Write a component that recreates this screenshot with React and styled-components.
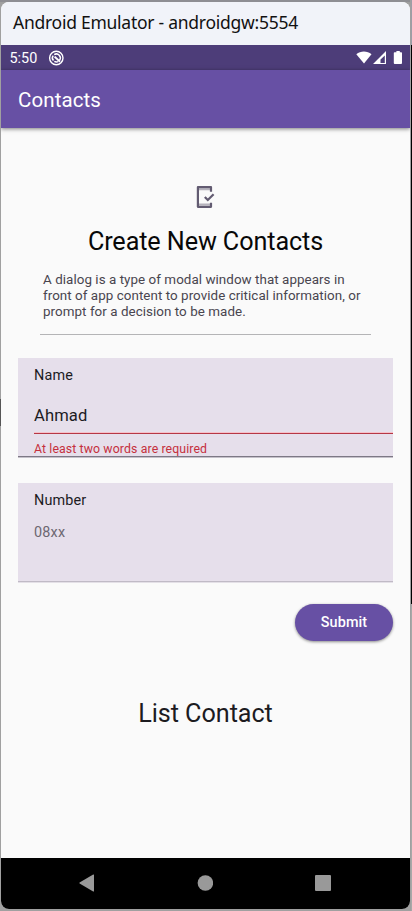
import React from 'react';
import styled, { createGlobalStyle } from 'styled-components';

const Global = createGlobalStyle`
  *, *::before, *::after { box-sizing: border-box; }
  body { margin: 0; overflow: hidden; font-family: Roboto, sans-serif; }
  h1, h2, p { margin: 0; font-weight: 400; }
`;

const Desktop = styled.div`
  width: 412px;
  height: 911px;
  padding: 2px 1px 2px;
  background:
    linear-gradient(#8e8e93, #8e8e93) 0 0 / 410px 2px no-repeat,
    linear-gradient(#555, #555) 0 399px / 1px 27px no-repeat,
    linear-gradient(#9c9da6 0 45px, #000 45px 604px, #a8a8a8 604px) 411px 0 / 1px 911px no-repeat,
    #a0a0a0;
`;

const EmulatorWindow = styled.div`
  width: 409px;
  height: 907px;
  display: flex;
  flex-direction: column;
  border-radius: 8px;
  overflow: hidden;
  background: #fafafa;
`;

const TitleBar = styled.header`
  height: 43px;
  padding-left: 12px;
  background: #f1f3f9;
  color: #111;
  font: 17.5px/41px "Noto Sans", sans-serif;
  letter-spacing: -0.26px;
  white-space: nowrap;
`;

const StatusBar = styled.div`
  height: 25px;
  padding: 0 7px 0 8.5px;
  display: flex;
  align-items: center;
  background: #4d3d79;
  color: #fff;
  svg { display: block; }
`;

const Clock = styled.span`
  width: 38.5px;
  font-size: 14.4px;
  line-height: 25px;
  padding-top: 1px;
`;

const SystemIcons = styled.div`
  margin-left: auto;
  display: flex;
  align-items: center;
`;

const AppBar = styled.div`
  position: relative;
  flex: none;
  height: 58px;
  padding-left: 17px;
  background: #6750a4;
  box-shadow: 0 1px 4px rgba(0, 0, 0, 0.5);
  color: #fff;
  font-size: 20.5px;
  line-height: 60px;
  letter-spacing: 0.1px;
`;

const Content = styled.main`
  flex: 1;
  display: flex;
  flex-direction: column;
  padding: 57px 17px 0;
`;

const DialogIcon = styled.svg`
  display: block;
  flex: none;
  margin: 0 0 0 174px;
`;

const Heading = styled.h1`
  margin-top: 17px;
  font-size: 25.2px;
  line-height: 32px;
  letter-spacing: -0.1px;
  text-align: center;
  color: #080808;
  white-space: nowrap;
`;

const Description = styled.p`
  margin: 14.3px 0 0 25px;
  color: #49454f;
  font-size: 13.4px;
  line-height: 15.8px;
  letter-spacing: 0.05px;
  white-space: nowrap;
`;

const Divider = styled.hr`
  width: 331px;
  height: 1px;
  flex: none;
  margin: 14.3px 0 23.5px 22px;
  border: 0;
  background: #b4b4b6;
`;

const Field = styled.div`
  display: flex;
  flex-direction: column;
  height: 99px;
  margin-bottom: 26px;
  padding: 9px 0 0 16px;
  background: #e6dfeb;
  border-bottom: 1px solid ${(p) => (p.$strong ? '#7d7885' : '#c0bac6')};
  box-shadow: 0 1px 0 ${(p) => (p.$strong ? '#c5c1ca' : '#e4e0e7')};
  white-space: nowrap;
`;

const FieldLabel = styled.span`
  color: #1c1b1f;
  font-size: 14.4px;
  line-height: 18px;
  letter-spacing: 0.15px;
`;

const FieldValue = styled.span`
  height: 42px;
  margin-top: 7px;
  border-bottom: 1px solid #b63745;
  box-shadow: inset 0 -1px 0 #f5c2cb;
  color: #1c1b1f;
  font-size: 16.6px;
  line-height: 48px;
  letter-spacing: 0.1px;
`;

const FieldError = styled.span`
  margin-top: 8px;
  color: #c5303d;
  font-size: 12.3px;
  line-height: 15px;
  letter-spacing: 0.11px;
`;

const Placeholder = styled.span`
  margin-top: 14px;
  color: #6c6771;
  font-size: 14.4px;
  line-height: 18px;
  letter-spacing: 0.2px;
`;

const SubmitButton = styled.button`
  align-self: flex-end;
  width: 98px;
  height: 37px;
  margin-top: -4px;
  padding: 0;
  border: 0;
  border-radius: 19px;
  background: #6750a4;
  box-shadow: 0 1px 3px rgba(0, 0, 0, 0.45);
  color: #fff;
  font: 500 14.4px/38px Roboto, sans-serif;
  letter-spacing: 0.1px;
`;

const ListTitle = styled.h2`
  margin-top: 57px;
  font-size: 25.2px;
  line-height: 32px;
  letter-spacing: -0.05px;
  text-align: center;
  color: #1c1b1f;
`;

const NavBar = styled.nav`
  height: 51px;
  display: flex;
  align-items: center;
  justify-content: space-between;
  padding: 0 79px 2px 78px;
  background: #000;
  svg { display: block; }
`;

export default function App() {
  return (
    <>
      <Global />
      <Desktop>
        <EmulatorWindow>
          <TitleBar>Android Emulator - androidgw:5554</TitleBar>
          <StatusBar>
            <Clock>5:50</Clock>
            <svg width="16" height="16" viewBox="0 0 16 16" fill="none" stroke="#fff">
              <circle cx="8.3" cy="8" r="6.7" strokeWidth="1.4" />
              <path d="M5.5 10.6A3.9 3.9 0 0 1 5.2 5.6M11.4 10.4A3.9 3.9 0 0 0 6.2 4.7M6.3 11.4q2 1 3.8.2" strokeWidth="1.5" />
              <path d="M6.6 6.6 12 11.8" strokeWidth="2" />
            </svg>
            <SystemIcons>
              <svg width="47" height="15" viewBox="0 0 47 15" fill="#fff">
                <path d="M0.3 4.2C4.5.5 11.3.5 15.5 4.2L8 13.6Z" />
                <path fillRule="evenodd" d="M30 1v13H17ZM28.8 5.5 24.5 9.5v3.4h4.3Z" />
                <path d="M38.6 2.3h1.8V1h3.4v1.3h1.4q.8 0 .8.8V13q0 1-.9 1h-6.4q-.9 0-.9-1V3.1q0-.8.8-.8Z" />
              </svg>
            </SystemIcons>
          </StatusBar>
          <AppBar>Contacts</AppBar>
          <Content>
            <DialogIcon width="24" height="24" viewBox="0 0 24 24" fill="none" stroke="#625b71" strokeWidth="2.2">
              <path d="M6 4.3h13M6 19.4h13" strokeWidth="2" strokeOpacity="0.45" />
              <path d="M19 6.8V2.2H5.9v19.6H19v-4" strokeLinejoin="round" />
              <path d="m12.8 12 3 3 5.8-5.8" strokeWidth="2.2" />
            </DialogIcon>
            <Heading>Create New Contacts</Heading>
            <Description>
              A dialog is a type of modal window that appears in<br />
              front of app content to provide critical information, or<br />
              prompt for a decision to be made.
            </Description>
            <Divider />
            <Field $strong>
              <FieldLabel>Name</FieldLabel>
              <FieldValue>Ahmad</FieldValue>
              <FieldError>At least two words are required</FieldError>
            </Field>
            <Field>
              <FieldLabel>Number</FieldLabel>
              <Placeholder>08xx</Placeholder>
            </Field>
            <SubmitButton>Submit</SubmitButton>
            <ListTitle>List Contact</ListTitle>
          </Content>
          <NavBar>
            <svg width="16" height="18" viewBox="0 0 16 18" fill="#999"><path d="M.6 8.4 14.2.6q.8-.4.8.5v15.8q0 .9-.8.5L.6 9.6Q0 9 .6 8.4Z" /></svg>
            <svg width="16" height="16" viewBox="0 0 16 16" fill="#999"><circle cx="8.4" cy="8" r="7.8" /></svg>
            <svg width="16" height="16" viewBox="0 0 16 16" fill="#999"><rect width="16" height="16" rx="1" /></svg>
          </NavBar>
        </EmulatorWindow>
      </Desktop>
    </>
  );
}
